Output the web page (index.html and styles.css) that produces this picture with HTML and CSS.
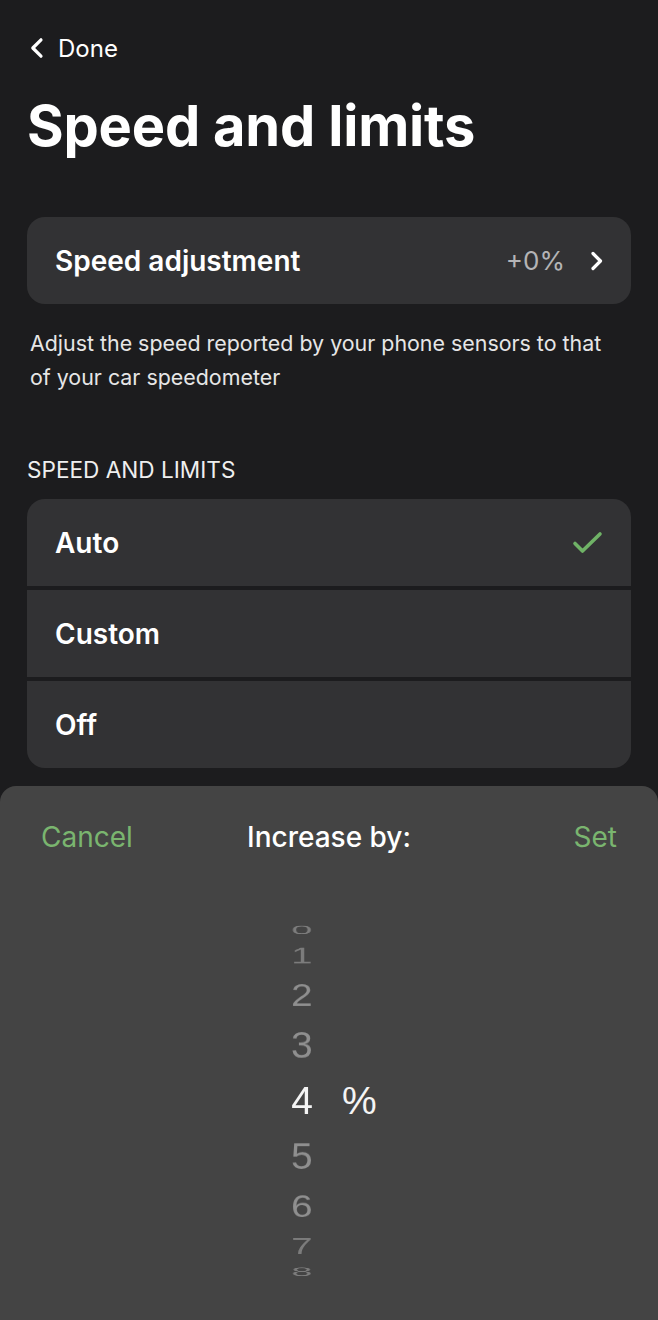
FILE: index.html
```html
<!DOCTYPE html>
<html lang="en">
<head>
  <meta charset="UTF-8">
  <meta name="viewport" content="width=device-width, initial-scale=1.0">
  <title>Speed and limits</title>
  <link rel="stylesheet" href="styles.css">
</head>
<body>
  <div class="page">
    <a class="back" href="#">
      <svg class="back-icon" width="16" height="24" viewBox="0 0 16 24">
        <path d="M12 3.8 L3.8 12 L12 20.2" />
      </svg>
      <span>Done</span>
    </a>

    <h1 class="title">Speed and limits</h1>

    <div class="card adjust">
      <span class="label">Speed adjustment</span>
      <span class="value">+0%</span>
      <svg class="chevron" width="16" height="22" viewBox="0 0 16 22">
        <path d="M4 3.5 L11.5 11 L4 18.5" />
      </svg>
    </div>
    <p class="hint">Adjust the speed reported by your phone sensors to that of your car speedometer</p>

    <h2 class="section">SPEED AND LIMITS</h2>
    <ul class="options">
      <li class="option">
        <span class="label">Auto</span>
        <svg class="check" width="34" height="26" viewBox="0 0 34 26">
          <path d="M4 13.5 L11.5 21 L29 4" />
        </svg>
      </li>
      <li class="option"><span class="label">Custom</span></li>
      <li class="option"><span class="label">Off</span></li>
    </ul>
  </div>

  <div class="sheet">
    <div class="sheet-head">
      <button class="link cancel">Cancel</button>
      <span class="sheet-title">Increase by:</span>
      <button class="link set">Set</button>
    </div>
    <div class="picker">
      <div class="wheel">
        <span class="digit edge" style="--i:-4">0</span>
        <span class="digit edge" style="--i:-3">1</span>
        <span class="digit" style="--i:-2">2</span>
        <span class="digit" style="--i:-1">3</span>
        <span class="digit selected" style="--i:0">4</span>
        <span class="digit" style="--i:1">5</span>
        <span class="digit" style="--i:2">6</span>
        <span class="digit edge" style="--i:3">7</span>
        <span class="digit edge" style="--i:4">8</span>
      </div>
      <span class="unit">%</span>
    </div>
  </div>
</body>
</html>
```

FILE: styles.css
```css
body {
  margin: 0;
  background-color: #1c1c1e;
  color: #ffffff;
  font-family: Inter, "Noto Sans", sans-serif;
  overflow: hidden;
}
.page {
  padding: 30px 27px 0;
}
.back {
  display: flex;
  align-items: center;
  gap: 13px;
  height: 36px;
  color: #ffffff;
  text-decoration: none;
  font-size: 24px;
  padding-left: 2px;
}
.back-icon path,
.chevron path {
  fill: none;
  stroke: #ffffff;
  stroke-width: 3.2;
  stroke-linecap: round;
  stroke-linejoin: round;
}
.title {
  margin: 26px 0 57px;
  font-size: 56px;
  line-height: 68px;
  font-weight: 700;
  letter-spacing: -0.2px;
}
.card {
  background-color: #323234;
  border-radius: 18px;
}
.adjust {
  display: flex;
  align-items: center;
  height: 87px;
  padding: 0 26px 0 28px;
}
.label {
  font-size: 28px;
  font-weight: 600;
}
.adjust .label {
  flex: 1;
}
.value {
  font-size: 26px;
  color: #b4b4b6;
  margin-right: 24px;
}
.hint {
  margin: 22px 0 0 3px;
  font-size: 21.4px;
  line-height: 34px;
  color: #e6e6e6;
  padding-right: 10px;
}
.section {
  margin: 62px 0 15px;
  font-size: 22.6px;
  line-height: 28px;
  font-weight: 400;
  color: #efefef;
}
.options {
  list-style: none;
  margin: 0;
  padding: 0;
  display: flex;
  flex-direction: column;
  gap: 4px;
  border-radius: 18px;
  overflow: hidden;
}
.option {
  display: flex;
  align-items: center;
  justify-content: space-between;
  height: 87px;
  padding: 0 26px 0 28px;
  background-color: #323234;
}
.check path {
  fill: none;
  stroke: #6fb266;
  stroke-width: 3.6;
  stroke-linecap: round;
  stroke-linejoin: round;
}
.sheet {
  margin-top: 18px;
  height: 534px;
  background-color: #444444;
  border-radius: 16px 16px 0 0;
}
.sheet-head {
  display: grid;
  grid-template-columns: 1fr auto 1fr;
  align-items: center;
  height: 102px;
  padding: 0 41px;
}
.link {
  background: none;
  border: none;
  padding: 0;
  font-family: inherit;
  font-size: 28px;
  color: #7ab56f;
  cursor: pointer;
}
.cancel {
  justify-self: start;
}
.set {
  justify-self: end;
}
.sheet-title {
  font-size: 28px;
  font-weight: 500;
}
.picker {
  display: flex;
  align-items: center;
  height: 426px;
  padding-left: 280px;
  font-family: "Liberation Sans", Arial, sans-serif;
  font-size: 39px;
}
.wheel {
  display: grid;
  width: 44px;
  justify-items: center;
  align-items: center;
  perspective: 2900px;
}
.digit {
  grid-area: 1 / 1;
  line-height: 46px;
  color: #8f8f8f;
  transform: translateZ(-193px) rotateX(calc(var(--i) * -16.8deg)) translateZ(193px);
  backface-visibility: hidden;
}
.digit.edge {
  color: #7c7c7c;
}
.digit.selected {
  color: #f4f4f4;
}
.unit {
  margin-left: 18px;
  color: #f4f4f4;
}
```
